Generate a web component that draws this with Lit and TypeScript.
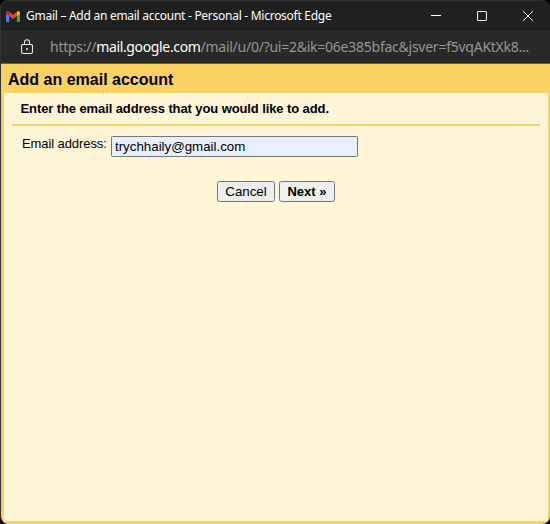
import { LitElement, html, css } from "lit";
import { customElement, property } from "lit/decorators.js";

@customElement("window-bar")
class WindowBar extends LitElement {
  @property() caption = "";

  static styles = css`
    :host { display: flex; align-items: center; height: 30px; background: #202020; color: #fff; }
    .logo { flex: none; margin-left: 5px; width: 14px; height: 11px; }
    .caption {
      margin-left: 6px; flex: 1; white-space: nowrap;
      font: 12px/16px "Noto Sans", sans-serif; letter-spacing: -0.27px;
    }
    .controls { display: flex; margin-right: -1px; }
    .control { width: 46px; height: 30px; display: flex; align-items: center; justify-content: center; }
    .control svg { width: 12px; height: 12px; fill: none; stroke: #fff; }
  `;

  render() {
    return html`
      <svg class="logo" viewBox="0 0 14 11">
        <path d="M0 2v8q0 1 1 1h2.2V4.2z" fill="#4285f4" />
        <path d="M14 2v8q0 1-1 1h-2.2V4.2z" fill="#34a853" />
        <path d="M0 1.7Q.1 0 1.5 0q.7 0 1.3.5L7 3.7 10.8.7V5L7 8 3.2 5.2 0 2.8z" fill="#ea4335" />
        <path d="M0 1.7Q.1 0 1.5 0q.9 0 1.7.8v4.4L0 2.8z" fill="#c5221f" />
        <path d="M10.8.7Q11.6 0 12.5 0 13.9 0 14 1.7v1.1l-3.2 2.4z" fill="#fbbc04" />
      </svg>
      <span class="caption">${this.caption}</span>
      <div class="controls">
        <span class="control"><svg viewBox="0 0 12 12"><path d="M1 5.5h10" /></svg></span>
        <span class="control"><svg viewBox="0 0 12 12"><rect x="1.5" y="1.5" width="9" height="9" rx=".6" /></svg></span>
        <span class="control"><svg viewBox="0 0 12 12"><path d="M1.2 1.2l9.6 9.6M10.8 1.2l-9.6 9.6" /></svg></span>
      </div>
    `;
  }
}

@customElement("address-bar")
class AddressBar extends LitElement {
  static styles = css`
    :host {
      display: flex; align-items: center; height: 32px; background: #292929;
      border-bottom: 1px solid #626262; color: #969696;
    }
    .lock { flex: none; margin-left: 20px; width: 12px; height: 16px; fill: none; stroke: #e8e8e8; stroke-width: 1.1; }
    .lock .dot { fill: #e8e8e8; stroke: none; }
    .url { margin-left: 17px; white-space: nowrap; font: 14px/20px "Noto Sans", sans-serif; letter-spacing: -0.25px; }
    .host { color: #fff; letter-spacing: -0.36px; }
  `;

  render() {
    return html`
      <svg class="lock" viewBox="0 0 12 16">
        <rect x=".5" y="5.5" width="11" height="9" rx="1.5" />
        <path d="M3.5 5.5V3.2a2.5 2.5 0 0 1 5 0v2.3" />
        <circle class="dot" cx="6" cy="10" r="1" />
      </svg>
      <span class="url">https://<span class="host">mail.google.com</span>/mail/u/0/?ui=2&amp;ik=06e385bfac&amp;jsver=f5vqAKtXk8...</span>
    `;
  }
}

@customElement("account-form")
class AccountForm extends LitElement {
  static styles = css`
    :host {
      display: flex; flex-direction: column; box-sizing: border-box; background: #fad163; color: #000;
      padding: 0 2px 3px 3px; font: 13px/16px "Liberation Sans", Arial, sans-serif;
    }
    h1 { margin: 0; padding-left: 4px; height: 29px; font-size: 16px; line-height: 31px; }
    .panel { flex: 1; background: #fff6d8; padding: 0 8px; }
    h2 {
      margin: 0; padding: 8px 0 7px 8.5px; height: 16px; font-size: 13px; line-height: 16px;
      letter-spacing: -0.1px; border-bottom: 2px solid #fad163;
    }
    .field { display: flex; margin-top: 10px; padding-left: 10px; }
    .label { width: 89px; white-space: nowrap; line-height: 16px; letter-spacing: -0.09px; }
    input {
      box-sizing: border-box; width: 247px; height: 21px; margin: 0; padding: 1px 3px; color: #000;
      border: 1px solid #767676; border-radius: 1.5px; background: #e8f0fe; outline: none;
      font: 13.333px "Liberation Sans", Arial, sans-serif; letter-spacing: -0.01px;
    }
    .actions { display: flex; justify-content: center; gap: 4px; margin-top: 24px; }
    button {
      box-sizing: border-box; height: 21px; padding: 0; border: 1px solid #767676; border-radius: 2.5px;
      background: #efefef; color: #000; font: 13.333px "Liberation Sans", Arial, sans-serif;
    }
    .cancel { width: 58px; }
    .next { width: 56px; font-weight: bold; font-size: 13px; }
  `;

  render() {
    return html`
      <h1>Add an email account</h1>
      <div class="panel">
        <h2>Enter the email address that you would like to add.</h2>
        <div class="field">
          <label class="label" for="email">Email address:</label>
          <input id="email" type="text" value="trychhaily@gmail.com" spellcheck="false" />
        </div>
        <div class="actions">
          <button class="cancel">Cancel</button>
          <button class="next">Next »</button>
        </div>
      </div>
    `;
  }
}

@customElement("app-root")
class AppRoot extends LitElement {
  static styles = css`
    :host { display: block; background: #000; }
    .window {
      display: flex; flex-direction: column; box-sizing: border-box; height: 524px; overflow: hidden;
      border-left: 1px solid #323232; border-top: 1px solid #323232; border-radius: 8px;
      background: #202020;
    }
    .body { flex: 1; }
  `;

  render() {
    return html`
      <div class="window">
        <window-bar caption="Gmail – Add an email account - Personal - Microsoft Edge"></window-bar>
        <address-bar></address-bar>
        <account-form class="body"></account-form>
      </div>
    `;
  }
}
